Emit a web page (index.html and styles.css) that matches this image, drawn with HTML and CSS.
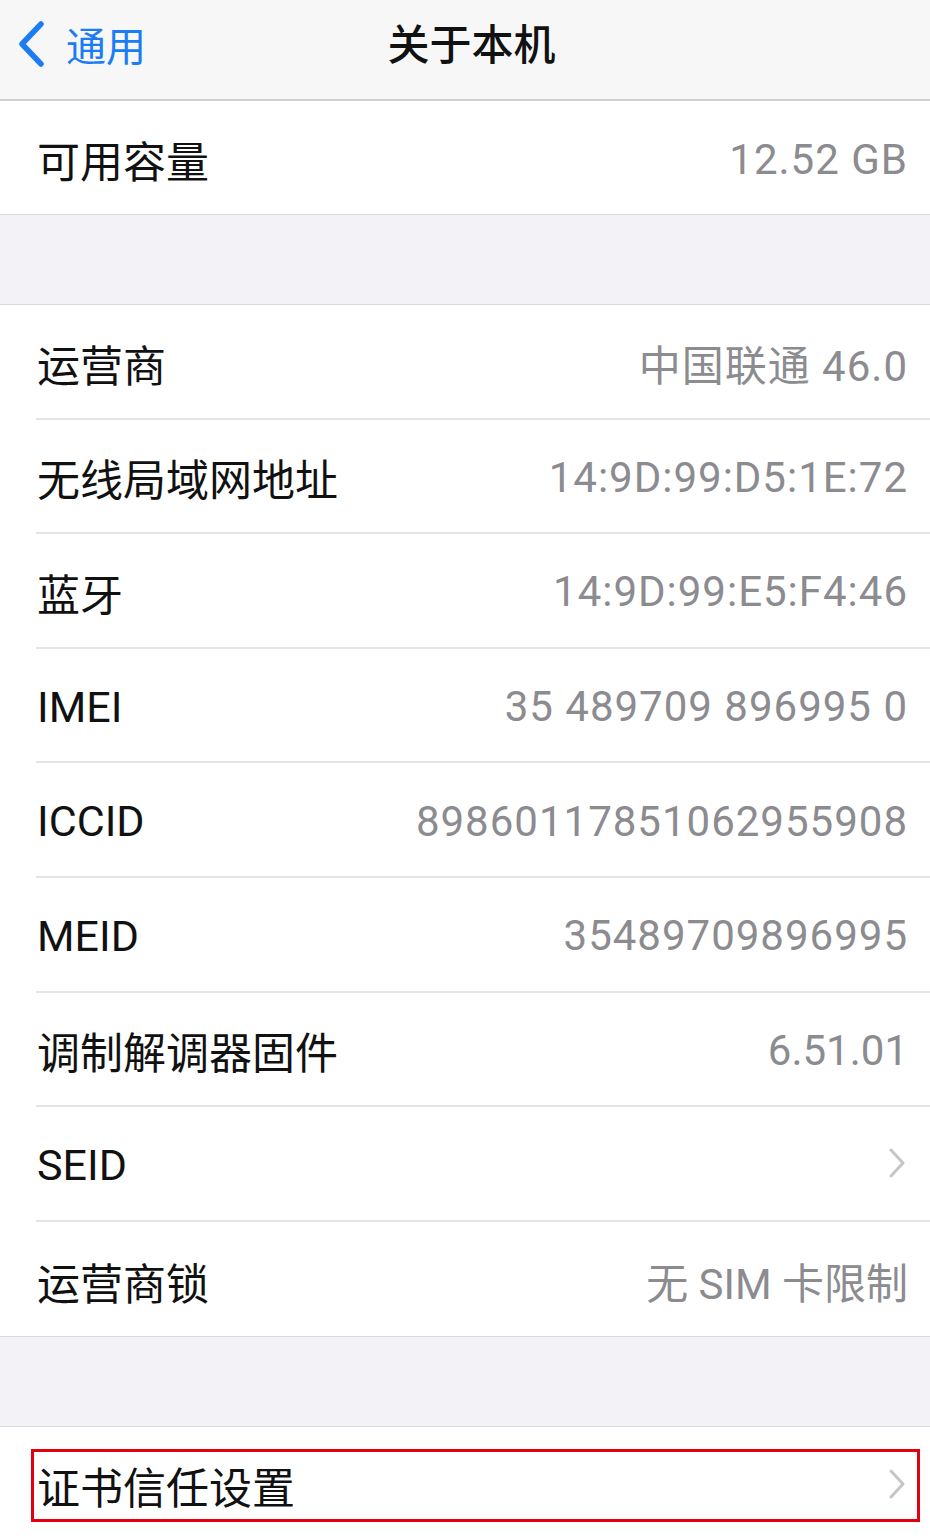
FILE: index.html
```html
<!DOCTYPE html>
<html lang="zh-CN">
<head>
<meta charset="utf-8">
<title>关于本机</title>
<link rel="stylesheet" href="styles.css">
</head>
<body>
<div class="screen">
  <header class="navbar">
    <div class="back">
      <svg class="back-icon" width="30" height="46" viewBox="0 0 30 46"><polyline points="25,3 6,23 25,43" fill="none" stroke="#1b7cf4" stroke-width="5.5" stroke-linecap="round" stroke-linejoin="round"/></svg>
      <span class="back-text">通用</span>
    </div>
    <div class="title">关于本机</div>
  </header>

  <section class="group">
    <div class="row"><span class="label">可用容量</span><span class="value">12.52 GB</span></div>
  </section>

  <div class="gap"></div>

  <section class="group">
    <div class="row"><span class="label">运营商</span><span class="value">中国联通 46.0</span></div>
    <div class="row"><span class="label">无线局域网地址</span><span class="value">14:9D:99:D5:1E:72</span></div>
    <div class="row"><span class="label">蓝牙</span><span class="value">14:9D:99:E5:F4:46</span></div>
    <div class="row"><span class="label">IMEI</span><span class="value">35 489709 896995 0</span></div>
    <div class="row"><span class="label">ICCID</span><span class="value">89860117851062955908</span></div>
    <div class="row"><span class="label">MEID</span><span class="value">35489709896995</span></div>
    <div class="row"><span class="label">调制解调器固件</span><span class="value narrow">6.51.01</span></div>
    <div class="row"><span class="label">SEID</span>
      <svg class="chev" width="18" height="32" viewBox="0 0 18 32"><polyline points="3,3 15,16 3,29" fill="none" stroke="#c5c5c9" stroke-width="3" stroke-linecap="round" stroke-linejoin="round"/></svg>
    </div>
    <div class="row"><span class="label">运营商锁</span><span class="value narrow">无 SIM 卡限制</span></div>
  </section>

  <div class="gap"></div>

  <section class="group">
    <div class="row last"><span class="label">证书信任设置</span>
      <svg class="chev" width="18" height="32" viewBox="0 0 18 32"><polyline points="3,3 15,16 3,29" fill="none" stroke="#c5c5c9" stroke-width="3" stroke-linecap="round" stroke-linejoin="round"/></svg>
      <div class="highlight"></div>
    </div>
  </section>
</div>
</body>
</html>
```

FILE: styles.css
```css
* { box-sizing: border-box; }
html, body { margin: 0; padding: 0; }
body {
  width: 930px;
  height: 1540px;
  overflow: hidden;
  background: #f2f2f7;
  font-family: "Roboto", "Noto Sans CJK SC", sans-serif;
  -webkit-font-smoothing: antialiased;
}
.screen { width: 930px; }

.navbar {
  position: relative;
  height: 101px;
  background: #f7f7f8;
  border-bottom: 2px solid #cfcfd2;
  display: flex;
  align-items: center;
  justify-content: center;
}
.back {
  position: absolute;
  left: 16px;
  top: 21px;
  display: flex;
  align-items: center;
  gap: 20px;
}
.back-icon { display: block; }
.back-text {
  font-family: "Noto Sans CJK SC", sans-serif;
  font-size: 40px;
  color: #1b7cf4;
  line-height: 46px;
}
.title {
  font-family: "Noto Sans CJK SC", sans-serif;
  font-size: 42px;
  font-weight: 500;
  color: #111;
  margin-top: -17px;
  margin-left: 13px;
}

.group {
  background: #fff;
  border-bottom: 1px solid #d9d9dd;
}
.gap {
  height: 90px;
  background: #f2f2f7;
  border-bottom: 1px solid #d9d9dd;
}

.row {
  position: relative;
  height: 114.6px;
  margin-left: 36px;
  padding-right: 22px;
  padding-top: 3px;
  display: flex;
  align-items: center;
  justify-content: space-between;
  border-bottom: 2px solid #e4e4e7;
}
.group .row:last-child { border-bottom: none; }
.group:first-of-type .row { height: 113px; }

.label {
  font-family: "Roboto", "Noto Sans CJK SC", sans-serif;
  font-size: 43px;
  color: #111;
  padding-left: 1px;
}
.value {
  font-family: "Roboto", "Noto Sans CJK SC", sans-serif;
  font-size: 42px;
  color: #8b8b90;
  letter-spacing: 1px;
}
.value.narrow { letter-spacing: 0; }
.chev { display: block; margin-right: 2px; margin-top: -3px; }

.row.last { height: 113px; }
.highlight {
  position: absolute;
  left: -5px;
  right: 10px;
  top: 22px;
  height: 73px;
  border: 3px solid #e4000f;
  pointer-events: none;
}
```
